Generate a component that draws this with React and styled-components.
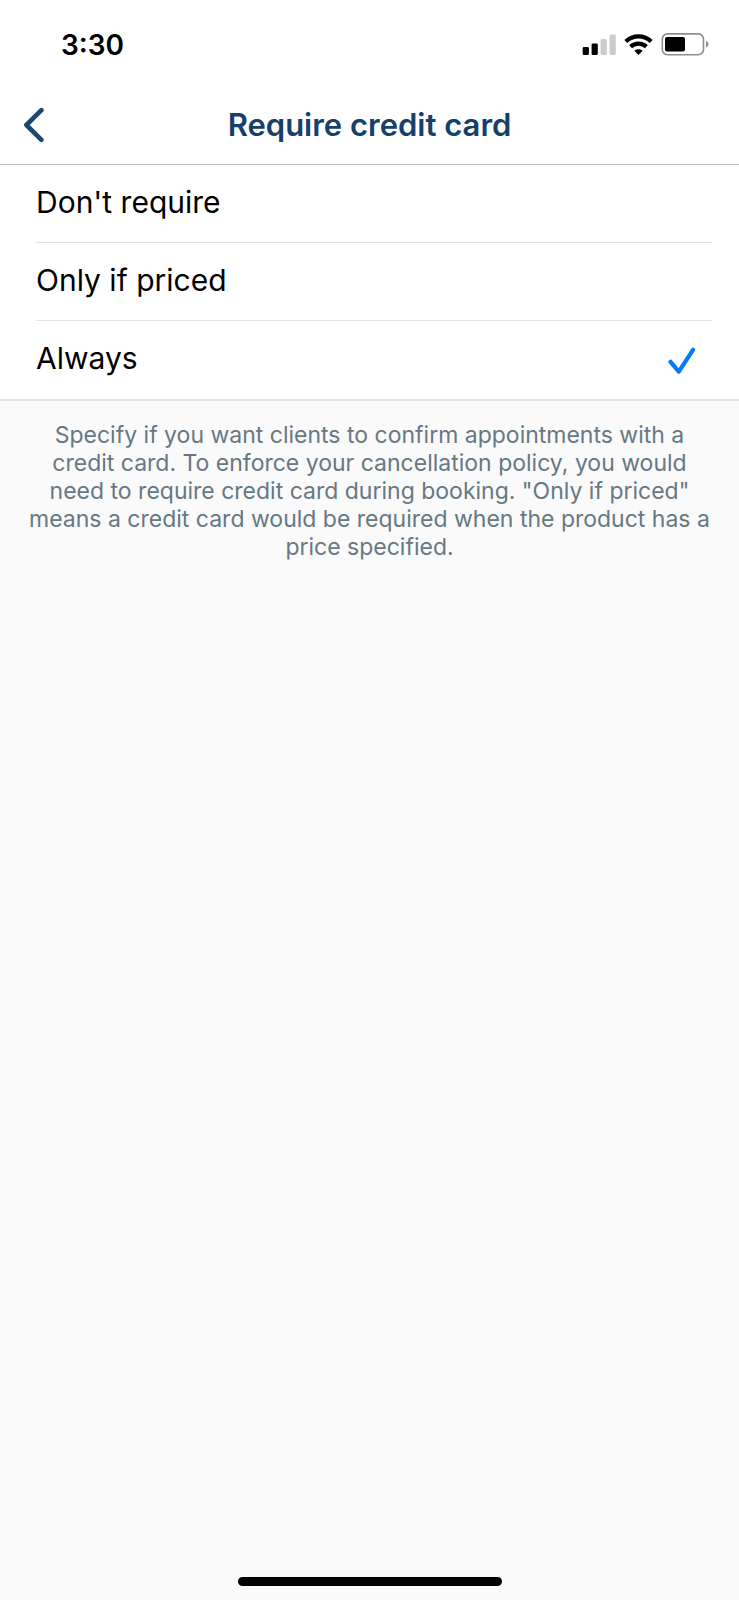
import {useState} from "react"
import styled, {createGlobalStyle} from "styled-components"

const GlobalStyle = createGlobalStyle `
  * {
    box-sizing: border-box;
  }

  body {
    margin: 0;
    font-family: Inter, "Liberation Sans", sans-serif;
    background-color: #FAFAFA;
  }
`

const Page = styled.div `
  display: flex;
  flex-direction: column;
  min-height: 100vh;
`

const StatusBar = styled.div `
  display: flex;
  align-items: center;
  justify-content: space-between;
  height: 87px;
  padding: 2px 30px 0 61px;
  background-color: #FFFFFF;
`

const Time = styled.time `
  font-size: 28px;
  font-weight: 600;
  line-height: 32px;
  color: #000000;
`

const StatusIcons = styled.div `
  display: flex;
  align-items: center;
  gap: 8px;

  svg {
    display: block;
  }
`

const Header = styled.header `
  display: grid;
  grid-template-columns: 60px 1fr 60px;
  align-items: center;
  height: 78px;
  padding-bottom: 2px;
  border-bottom: 1px solid #BDBDBD;
  background-color: #FFFFFF;
`

const BackButton = styled.button `
  display: flex;
  align-items: center;
  height: 60px;
  padding: 0 0 0 22px;
  border: none;
  background: none;
  cursor: pointer;
`

const Title = styled.h1 `
  margin: 0;
  font-size: 31px;
  font-weight: 600;
  line-height: 36px;
  text-align: center;
  color: #15406B;
`

const Options = styled.fieldset `
  min-width: 0;
  margin: 0;
  padding: 0 27px 1px 36px;
  border: none;
  border-bottom: 2px solid #DCE6E8;
  background-color: #FFFFFF;
`

const Option = styled.label `
  display: flex;
  align-items: center;
  justify-content: space-between;
  height: 77px;
  padding-right: 16px;
  cursor: pointer;

  & + & {
    height: 78px;
    border-top: 1px solid #DFE7E9;
  }
`

const OptionText = styled.span `
  padding-bottom: 4px;
  font-size: 30px;
  line-height: 36px;
  color: #000000;
`

const RadioBox = styled.span `
  display: grid;
  padding-top: 2px;

  > * {
    grid-area: 1 / 1;
  }

  svg {
    visibility: hidden;
    pointer-events: none;
  }

  input:checked + svg {
    visibility: visible;
  }
`

const Radio = styled.input `
  width: 28px;
  height: 28px;
  margin: 0;
  appearance: none;
  cursor: pointer;
`

const Note = styled.p `
  margin: 0;
  padding: 20px 24px;
  font-size: 23px;
  line-height: 28px;
  text-align: center;
  color: #667884;
`

const HomeIndicator = styled.div `
  width: 264px;
  height: 9px;
  margin: auto auto 14px;
  border-radius: 5px;
  background-color: #000000;
`

function SignalIcon() {
  return (
    <svg width="34" height="22" viewBox="0 0 34 22" aria-hidden="true">
      <rect x="0.7" y="13" width="6.2" height="8" rx="1.3" fill="#000000" />
      <rect x="9.6" y="9.5" width="6.2" height="11.5" rx="1.3" fill="#000000" />
      <rect x="18.6" y="5" width="6.2" height="16" rx="1.3" fill="#CCCCCC" />
      <rect x="27.6" y="0.6" width="6.2" height="20.4" rx="1.3" fill="#CCCCCC" />
    </svg>
  )
}

function WifiIcon() {
  return (
    <svg width="29" height="22" viewBox="0 0 29 22" fill="none" aria-hidden="true">
      <path d="M1.8 7.4C8.8 0.6 20.2 0.6 27.2 7.4" stroke="#000000" strokeWidth="4.2" />
      <path d="M6.6 12.6C11 8.5 18 8.5 22.4 12.6" stroke="#000000" strokeWidth="4.2" />
      <path d="M10.4 16.8C12.6 14.8 16.4 14.8 18.6 16.8L14.5 21Z" fill="#000000" />
    </svg>
  )
}

function BatteryIcon() {
  return (
    <svg width="48" height="23" viewBox="0 0 48 23" fill="none" aria-hidden="true">
      <rect x="1.3" y="0.9" width="41.2" height="20.8" rx="5.2" stroke="#8E8E8E" strokeWidth="1.6" />
      <rect x="4" y="4" width="20" height="14.6" rx="2" fill="#000000" />
      <path d="M45 8C48.2 9 48.2 13.6 45 14.6Z" fill="#8E8E8E" />
    </svg>
  )
}

function BackIcon() {
  return (
    <svg width="24" height="36" viewBox="0 0 24 36" fill="none" aria-hidden="true">
      <path d="M19.4 3.2L4.4 18L19.4 32.8" stroke="#1C4770" strokeWidth="4.6" strokeLinecap="round" strokeLinejoin="round" />
    </svg>
  )
}

function CheckIcon() {
  return (
    <svg width="28" height="28" viewBox="0 0 28 28" fill="none" aria-hidden="true">
      <path d="M2.6 14.8L10.8 24.6L25 2.8" stroke="#007AFF" strokeWidth="4.2" strokeLinecap="round" strokeLinejoin="round" />
    </svg>
  )
}

const options = [
  {value: "never", text: "Don't require"},
  {value: "priced", text: "Only if priced"},
  {value: "always", text: "Always"}
]

export default function App() {
  const [selected, setSelected] = useState("always")

  return (
    <>
      <GlobalStyle />
      <Page>
        <StatusBar>
          <Time>3:30</Time>
          <StatusIcons>
            <SignalIcon />
            <WifiIcon />
            <BatteryIcon />
          </StatusIcons>
        </StatusBar>
        <Header>
          <BackButton type="button" aria-label="Back">
            <BackIcon />
          </BackButton>
          <Title id="title">Require credit card</Title>
        </Header>
        <Options aria-labelledby="title" aria-describedby="note">
          {options.map((option) => {
            return (
              <Option key={option.value}>
                <OptionText>{option.text}</OptionText>
                <RadioBox>
                  <Radio
                    type="radio"
                    name="requireCard"
                    value={option.value}
                    checked={selected === option.value}
                    onChange={() => setSelected(option.value)}
                  />
                  <CheckIcon />
                </RadioBox>
              </Option>
            )
          })}
        </Options>
        <Note id="note">
          Specify if you want clients to confirm appointments with a credit card. To enforce your cancellation policy, you would need to require credit card during booking. "Only if priced" means a credit card would be required when the product has a price specified.
        </Note>
        <HomeIndicator />
      </Page>
    </>
  )
}
